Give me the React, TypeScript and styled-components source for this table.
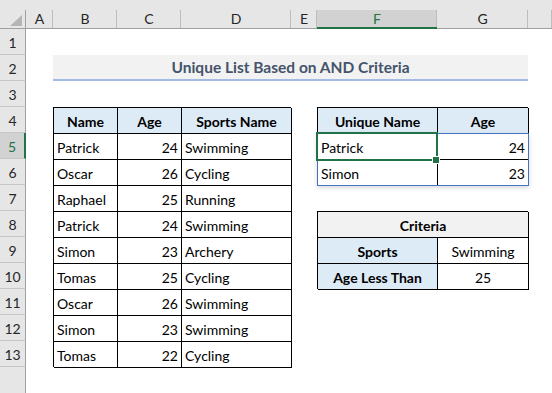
import { Fragment } from "react";
import styled, { createGlobalStyle } from "styled-components";

const GlobalStyle = createGlobalStyle`
  body {
    margin: 0;
    background: #fff;
  }
`;

const Sheet = styled.div`
  display: grid;
  grid-template-columns: 26px 27px 64px 64px 110px 26px 120px 91px 1fr;
  grid-template-rows: 10px 19px repeat(13, 26px) 1fr;
  width: 552px;
  height: 393px;
  overflow: hidden;
  background: #fff;
  font-family: Lato, "Open Sans", sans-serif;
  color: #000;
`;

const TopStrip = styled.div`
  grid-column: 1 / -1;
  grid-row: 1;
  background: #e6e6e6;
`;

const Corner = styled.div`
  grid-column: 1;
  grid-row: 2;
  background: #e6e6e6;
  border-right: 1px solid #a0a0a0;
  border-bottom: 1px solid #a0a0a0;
  display: flex;
  justify-content: flex-end;
  align-items: flex-end;
  padding: 0 3px 2px 0;
`;

const ColHead = styled.div<{ $col: number; $selected?: boolean }>`
  grid-column: ${(p) => p.$col};
  grid-row: 2;
  display: flex;
  justify-content: center;
  align-items: center;
  font-size: 14px;
  line-height: 16px;
  color: ${(p) => (p.$selected ? "#217346" : "#262626")};
  background: linear-gradient(#bdbdbd, #bdbdbd) right top / 1px 100% no-repeat,
    ${(p) => (p.$selected ? "#d2d2d2" : "#e6e6e6")};
  border-bottom: ${(p) => (p.$selected ? "2px solid #217346" : "1px solid #a0a0a0")};
  padding-top: ${(p) => (p.$selected ? "1px" : "0")};
`;

const RowHead = styled.div<{ $row: number; $selected?: boolean }>`
  grid-column: 1;
  grid-row: ${(p) => p.$row};
  display: flex;
  justify-content: center;
  align-items: flex-end;
  padding-bottom: 3px;
  font-size: 14px;
  line-height: 16px;
  color: ${(p) => (p.$selected ? "#217346" : "#262626")};
  background: ${(p) => (p.$selected ? "#d2d2d2" : "#e6e6e6")};
  border-bottom: 1px solid #c6c6c6;
  border-right: ${(p) => (p.$selected ? "2px solid #217346" : "1px solid #a0a0a0")};
`;

const Filler = styled.div`
  grid-column: 1;
  grid-row: 16;
  background: #e6e6e6;
  border-right: 1px solid #a0a0a0;
`;

const Title = styled.div`
  grid-column: 3 / 9;
  grid-row: 4;
  background: #f2f2f2;
  border-bottom: 2px solid #a4bbe3;
  display: flex;
  justify-content: center;
  align-items: center;
  font-size: 15.5px;
  font-weight: 700;
  color: #44546a;
`;

const Table = styled.div<{ $col: string; $row: string; $cols: string }>`
  grid-column: ${(p) => p.$col};
  grid-row: ${(p) => p.$row};
  position: relative;
  display: grid;
  grid-template-columns: ${(p) => p.$cols};
  grid-auto-rows: 26px;
  box-shadow: 1px 1px 0 #000;
`;

const Cell = styled.div<{
  $align?: "left" | "right" | "center";
  $bold?: boolean;
  $bg?: string;
  $span?: number;
}>`
  grid-column: span ${(p) => p.$span ?? 1};
  box-sizing: border-box;
  border-left: 1px solid #000;
  border-top: 1px solid #000;
  background: ${(p) => p.$bg ?? "#fff"};
  display: flex;
  align-items: flex-end;
  justify-content: ${(p) =>
    p.$align === "right" ? "flex-end" : p.$align === "center" ? "center" : "flex-start"};
  padding: 0 3px 3px;
  font-size: 14px;
  line-height: 16px;
  font-weight: ${(p) => (p.$bold ? 700 : 400)};
  white-space: nowrap;
  overflow: hidden;
`;

const SpillRange = styled.div`
  position: absolute;
  left: 0;
  top: 26px;
  width: 212px;
  height: 53px;
  box-sizing: border-box;
  border: 1px solid #4472c4;
  box-shadow: 0 2px 5px rgba(0, 0, 0, 0.15);
  pointer-events: none;
`;

const ActiveCell = styled.div`
  position: absolute;
  left: -1px;
  top: 25px;
  width: 122px;
  height: 29px;
  box-sizing: border-box;
  border: 2px solid #217346;
`;

const FillHandle = styled.div`
  position: absolute;
  left: 116px;
  top: 50px;
  width: 6px;
  height: 6px;
  background: #217346;
  box-shadow: 0 0 0 1px #fff;
`;

const HEAD_BLUE = "#ddebf7";

const columns = ["A", "B", "C", "D", "E", "F", "G", ""];

const players: [string, number, string][] = [
  ["Patrick", 24, "Swimming"],
  ["Oscar", 26, "Cycling"],
  ["Raphael", 25, "Running"],
  ["Patrick", 24, "Swimming"],
  ["Simon", 23, "Archery"],
  ["Tomas", 25, "Cycling"],
  ["Oscar", 26, "Swimming"],
  ["Simon", 23, "Swimming"],
  ["Tomas", 22, "Cycling"],
];

const unique: [string, number][] = [
  ["Patrick", 24],
  ["Simon", 23],
];

export default function App() {
  return (
    <>
      <GlobalStyle />
      <Sheet>
        <TopStrip />
        <Corner>
          <svg width="12" height="11" viewBox="0 0 12 11">
            <polygon points="12,0 12,11 0,11" fill="#b5b5b5" />
          </svg>
        </Corner>
        {columns.map((c, i) => (
          <ColHead key={i} $col={i + 2} $selected={c === "F"}>
            {c}
          </ColHead>
        ))}
        {Array.from({ length: 13 }, (_, i) => (
          <RowHead key={i} $row={i + 3} $selected={i + 1 === 5}>
            {i + 1}
          </RowHead>
        ))}
        <Filler />

        <Title>Unique List Based on AND Criteria</Title>

        <Table $col="3 / 6" $row="6 / 16" $cols="64px 64px 110px">
          <Cell $bold $align="center" $bg={HEAD_BLUE}>Name</Cell>
          <Cell $bold $align="center" $bg={HEAD_BLUE}>Age</Cell>
          <Cell $bold $align="center" $bg={HEAD_BLUE}>Sports Name</Cell>
          {players.map(([name, age, sport], i) => (
            <Fragment key={i}>
              <Cell>{name}</Cell>
              <Cell $align="right">{age}</Cell>
              <Cell>{sport}</Cell>
            </Fragment>
          ))}
        </Table>

        <Table $col="7 / 9" $row="6 / 9" $cols="120px 91px">
          <Cell $bold $align="center" $bg={HEAD_BLUE}>Unique Name</Cell>
          <Cell $bold $align="center" $bg={HEAD_BLUE}>Age</Cell>
          {unique.map(([name, age], i) => (
            <Fragment key={i}>
              <Cell>{name}</Cell>
              <Cell $align="right">{age}</Cell>
            </Fragment>
          ))}
          <SpillRange />
          <ActiveCell />
          <FillHandle />
        </Table>

        <Table $col="7 / 9" $row="10 / 13" $cols="120px 91px">
          <Cell $bold $align="center" $bg="#f2f2f2" $span={2}>Criteria</Cell>
          <Cell $bold $align="center" $bg={HEAD_BLUE}>Sports</Cell>
          <Cell $align="center">Swimming</Cell>
          <Cell $bold $align="center" $bg={HEAD_BLUE}>Age Less Than</Cell>
          <Cell $align="center">25</Cell>
        </Table>
      </Sheet>
    </>
  );
}
